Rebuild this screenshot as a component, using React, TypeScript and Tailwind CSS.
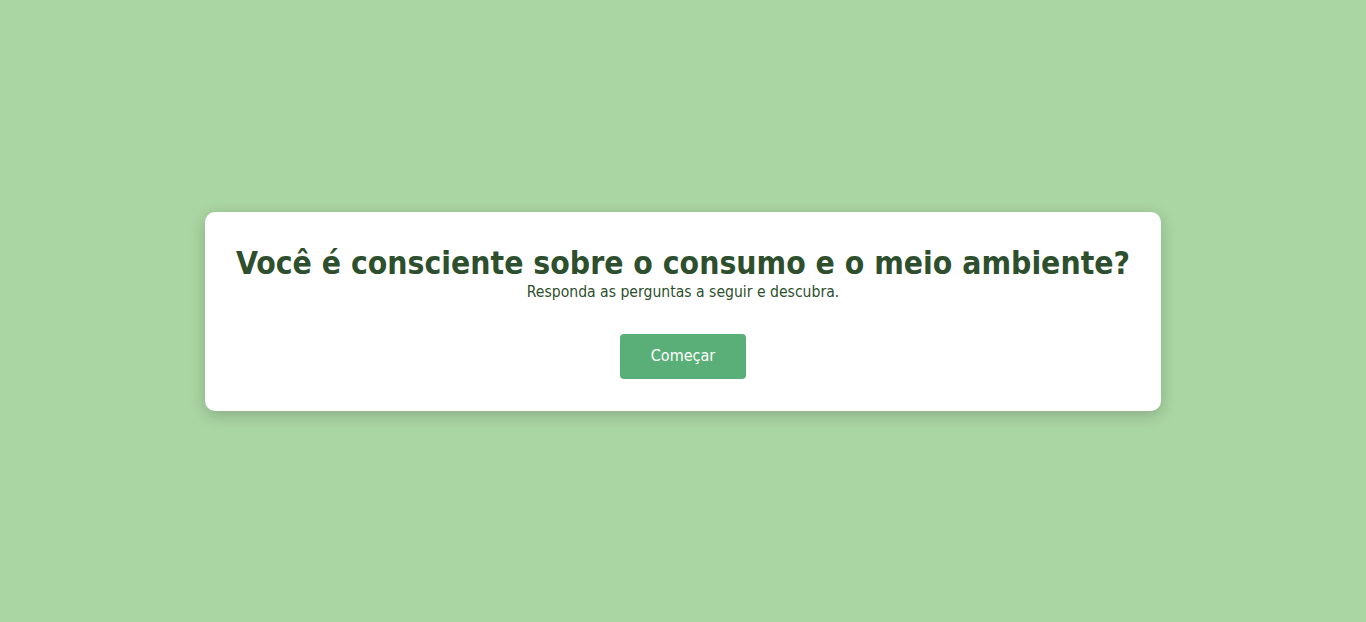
const App = () => {
    return (
        <div className="min-h-screen w-full bg-[#aad6a3] flex items-center justify-center" style={{ fontFamily: '"DejaVu Sans Condensed", "DejaVu Sans", sans-serif' }}>
            <div className="w-[70%] bg-white rounded-[10px] shadow-[0_4px_16px_rgba(0,0,0,0.2)] px-5 pt-8 pb-8 flex flex-col items-center text-[#2d4f2d]">
                <h1 className="text-[31.6px] font-bold leading-[38px] text-center whitespace-nowrap">Você é consciente sobre o consumo e o meio ambiente?</h1>
                <p className="text-[15.6px] leading-5 text-center">Responda as perguntas a seguir e descubra.</p>
                <button className="mt-8 w-[126px] h-[45px] rounded bg-[#5aaf78] text-white text-base">Começar</button>
            </div>
        </div>
    )
}

export default App
